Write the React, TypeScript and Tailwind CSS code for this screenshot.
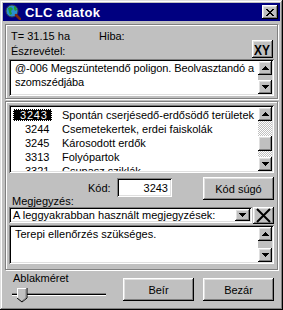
import React from "react";

const raised =
  "bg-[#c0c0c0] shadow-[inset_-1px_-1px_#000,inset_1px_1px_#fff,inset_-2px_-2px_#808080,inset_2px_2px_#dfdfdf]";
const sunken =
  "shadow-[inset_1px_1px_#808080,inset_-1px_-1px_#fff,inset_2px_2px_#000,inset_-2px_-2px_#dfdfdf]";
const etched = "border border-[#808080] shadow-[inset_1px_1px_#fff,1px_1px_#fff]";
const checker =
  "bg-[repeating-conic-gradient(#fff_0_25%,#c0c0c0_0_50%)] bg-[length:2px_2px]";

function Tri({ up }: { up: boolean }) {
  return (
    <svg width="7" height="4" viewBox="0 0 7 4" shapeRendering="crispEdges">
      <path
        d={
          up
            ? "M3 0h1v1H3z M2 1h3v1H2z M1 2h5v1H1z M0 3h7v1H0z"
            : "M0 0h7v1H0z M1 1h5v1H1z M2 2h3v1H2z M3 3h1v1H3z"
        }
        fill="#000"
      />
    </svg>
  );
}

function ArrowBtn({ up }: { up: boolean }) {
  return (
    <div className={`${raised} flex items-center justify-center shrink-0 w-full h-[14px]`}>
      <Tri up={up} />
    </div>
  );
}

function GlobeIcon() {
  return (
    <svg width="16" height="16" viewBox="0 0 16 16">
      <circle cx="7" cy="7" r="6" fill="#2a8fd0" stroke="#404040" strokeWidth="1" />
      <path d="M3 4 L6 3 L8 5 L6 7 L7 10 L5 11 L4 8 Z" fill="#1f9a3a" />
      <path d="M9 2 L11 3 L12 6 L10 7 L9 5 Z" fill="#1f9a3a" />
      <path d="M11 11 L15 15" stroke="#7a2a10" strokeWidth="2.5" strokeLinecap="round" />
    </svg>
  );
}

function CloseX() {
  return (
    <svg width="8" height="7" viewBox="0 0 8 7" shapeRendering="crispEdges">
      <path
        d="M0 0h2v1H0z M6 0h2v1H6z M1 1h2v1H1z M5 1h2v1H5z M2 2h4v1H2z M3 3h2v1H3z M2 4h4v1H2z M1 5h2v1H1z M5 5h2v1H5z M0 6h2v1H0z M6 6h2v1H6z"
        fill="#000"
      />
    </svg>
  );
}

function BigX() {
  return (
    <svg width="15" height="15" viewBox="0 0 15 15">
      <path d="M1 1 L14 14 M14 1 L1 14" stroke="#000" strokeWidth="2" />
    </svg>
  );
}

function Slider() {
  return (
    <svg width="96" height="16" viewBox="0 0 96 16" shapeRendering="crispEdges">
      <rect x="0" y="6" width="94" height="1" fill="#808080" />
      <rect x="0" y="7" width="94" height="1" fill="#000" />
      <rect x="0" y="8" width="94" height="1" fill="#fff" />
      <path d="M5 1 H15 V11 L10 15 L5 11 Z" fill="#c0c0c0" />
      <path d="M5 11 V1 H15" stroke="#fff" strokeWidth="1" fill="none" />
      <path d="M15 1 V11 L10 15 L5 11" stroke="#000" strokeWidth="1" fill="none" shapeRendering="auto" />
      <path d="M14 2 V11 L10 14" stroke="#808080" strokeWidth="1" fill="none" shapeRendering="auto" />
    </svg>
  );
}

const rows: [string, string][] = [
  ["3243", "Spontán cserjésedő-erdősödő területek"],
  ["3244", "Csemetekertek, erdei faiskolák"],
  ["3245", "Károsodott erdők"],
  ["3313", "Folyópartok"],
  ["3321", "Csupasz sziklák"],
];

export default function App() {
  return (
    <div className="w-[283px] h-[310px] bg-[#c0c0c0] p-[3px] flex flex-col font-['Liberation_Sans',Arial,sans-serif] text-[11px] leading-[14px] text-black shadow-[inset_-1px_-1px_#000,inset_1px_1px_#dfdfdf,inset_-2px_-2px_#808080,inset_2px_2px_#fff]">
      {/* Title bar */}
      <div className="h-[18px] shrink-0 bg-[#000080] flex items-center pl-[2px] pr-[2px]">
        <GlobeIcon />
        <span className="ml-[4px] text-white font-bold text-[13px] leading-none tracking-[0.3px]">CLC adatok</span>
        <div className={`${raised} ml-auto w-[16px] h-[14px] flex items-center justify-center`}>
          <CloseX />
        </div>
      </div>

      {/* Panel 1 */}
      <div className={`${etched} mt-[3px] ml-[2px] w-[273px] h-[75px] shrink-0 px-[3px] flex flex-col`}>
        <div className="h-[34px] flex justify-between items-end">
          <div className="self-start pt-[4px] pl-[2px]">
            <div className="flex">
              <span className="w-[88px]">T= 31.15 ha</span>
              <span>Hiba:</span>
            </div>
            <div className="mt-[1px]">Észrevétel:</div>
          </div>
          <div className={`${raised} w-[21px] h-[18px] mb-[1px] mr-[1px] flex items-center justify-center`}>
            <span className="inline-block font-bold text-[15px] leading-none scale-x-[0.8]">XY</span>
          </div>
        </div>
        <div className={`${sunken} bg-white h-[37px] p-[2px] flex`}>
          <div className="flex-1 pl-[4px] whitespace-nowrap overflow-hidden tracking-[-0.1px]">
            @-006 Megszüntetendő poligon. Beolvasztandó a
            <br />
            szomszédjába
          </div>
          <div className="w-[14px] flex flex-col bg-[#c0c0c0]">
            <ArrowBtn up />
            <div className="flex-1" />
            <ArrowBtn up={false} />
          </div>
        </div>
      </div>

      {/* Panel 2 */}
      <div className={`${etched} mt-[2px] ml-[2px] w-[273px] h-[169px] shrink-0 px-[3px] pt-[3px] flex flex-col`}>
        <div className={`${sunken} bg-white h-[68px] shrink-0 p-[2px] flex`}>
          <div className="flex-1 pt-[1px] overflow-hidden">
            {rows.map(([code, name], i) => (
              <div key={code} className="h-[14px] flex items-center whitespace-nowrap">
                {i === 0 ? (
                  <div className="ml-[2px] w-[39px] h-[12px] bg-black text-white outline-1 outline-dotted outline-offset-[-1px] outline-white pl-[7px] leading-[12px] tracking-[0.8px]">
                    {code}
                  </div>
                ) : (
                  <div className="ml-[2px] w-[39px] h-[12px] pl-[12px] leading-[12px]">{code}</div>
                )}
                <span className="ml-[10px]">{name}</span>
              </div>
            ))}
          </div>
          <div className="w-[14px] flex flex-col">
            <ArrowBtn up />
            <div className={`h-[15px] ${checker}`} />
            <div className={`${raised} h-[15px] shrink-0`} />
            <div className={`flex-1 ${checker}`} />
            <ArrowBtn up={false} />
          </div>
        </div>

        <div className="mt-[4px] h-[23px] shrink-0 flex items-start">
          <div className="w-[79px] pl-[3px] pt-[17px]">
            <div className="h-[13px] overflow-hidden">Megjegyzés:</div>
          </div>
          <span className="w-[29px] pt-[4px]">Kód:</span>
          <div className={`${sunken} bg-white w-[55px] h-[19px] mt-[1px] flex items-center justify-end pr-[4px]`}>
            3243
          </div>
          <div className={`${raised} ml-auto w-[71px] h-[23px] flex items-center justify-center`}>
            Kód súgó
          </div>
        </div>

        <div className="mt-[7px] h-[17px] shrink-0 flex items-start">
          <div className={`${sunken} bg-white w-[243px] h-[16px] p-[2px] flex items-center`}>
            <span className="flex-1 pl-[2px] whitespace-nowrap overflow-hidden leading-[12px]">
              A leggyakrabban használt megjegyzések:
            </span>
            <div className={`${raised} w-[15px] h-[12px] flex items-center justify-center`}>
              <Tri up={false} />
            </div>
          </div>
          <div className={`${raised} ml-auto w-[21px] h-[17px] flex items-center justify-center`}>
            <BigX />
          </div>
        </div>

        <div className={`${sunken} bg-white mt-[1px] h-[39px] shrink-0 p-[2px] flex`}>
          <div className="flex-1 pl-[4px] whitespace-nowrap">Terepi ellenőrzés szükséges.</div>
          <div className="w-[14px] flex flex-col bg-[#c0c0c0]">
            <ArrowBtn up />
            <div className="flex-1" />
            <ArrowBtn up={false} />
          </div>
        </div>
      </div>

      {/* Bottom */}
      <div className="flex-1 flex">
        <div className="pl-[10px] pt-[1px] flex flex-col">
          <span>Ablakméret</span>
          <div className="ml-[-1px] mt-[2px]">
            <Slider />
          </div>
        </div>
        <div className="ml-auto pt-[8px] pr-[6px] flex gap-[9px]">
          <div className={`${raised} w-[71px] h-[23px] flex items-center justify-center`}>Beír</div>
          <div className={`${raised} w-[71px] h-[23px] flex items-center justify-center`}>Bezár</div>
        </div>
      </div>
    </div>
  );
}
